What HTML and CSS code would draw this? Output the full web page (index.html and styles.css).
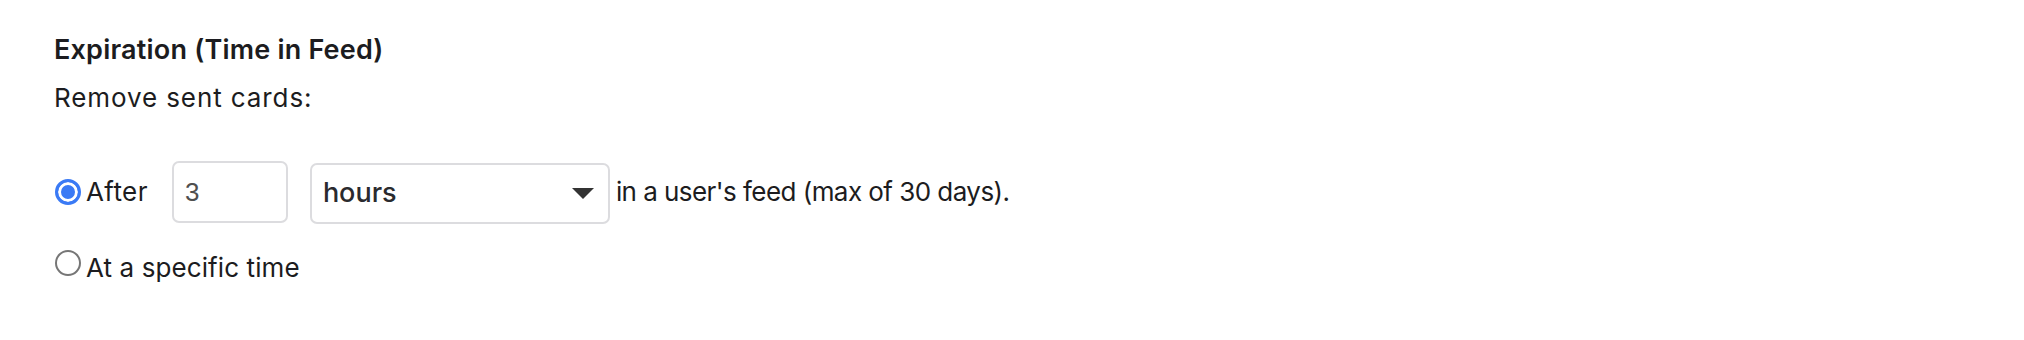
FILE: index.html
```html
<!DOCTYPE html>
<html lang="en">
<head>
<meta charset="utf-8">
<title>Expiration</title>
<link rel="stylesheet" href="styles.css">
</head>
<body>
<section class="panel">
  <h2 class="title">Expiration (Time in Feed)</h2>
  <p class="lead">Remove sent cards:</p>
  <div class="options">
    <label class="row row-after">
      <input type="radio" name="exp" class="radio" checked>
      <span class="label-text label-after">After</span>
      <span class="num-input">3</span>
      <span class="select">
        <span class="select-value">hours</span>
        <span class="caret"></span>
      </span>
      <span class="tail">in a user's feed (max of 30 days).</span>
    </label>
    <label class="row row-time">
      <input type="radio" name="exp" class="radio">
      <span class="label-text label-time">At a specific time</span>
    </label>
  </div>
</section>
</body>
</html>
```

FILE: styles.css
```css
html, body {
  margin: 0;
  padding: 0;
  background: #ffffff;
}

body {
  font-family: "Inter", "Liberation Sans", sans-serif;
  color: #1c1c20;
}

.panel {
  padding: 32px 0 0 54px;
}

.title {
  margin: 0;
  font-size: 27px;
  line-height: 36px;
  font-weight: 600;
  letter-spacing: 0.2px;
  color: #1c1c20;
}

.lead {
  margin: 12px 0 0 0;
  font-size: 26px;
  line-height: 36px;
  font-weight: 400;
  letter-spacing: 0.9px;
}

.options {
  margin-top: 45px;
  display: flex;
  flex-direction: column;
  gap: 27px;
}

.row {
  display: flex;
  align-items: center;
  font-size: 26px;
  line-height: 36px;
}

.row-after {
  height: 62px;
}

.radio {
  appearance: none;
  -webkit-appearance: none;
  margin: 0 5px 0 1px;
  width: 26px;
  height: 26px;
  border-radius: 50%;
  box-sizing: border-box;
  border: 2.5px solid #767676;
  background: #fff;
  flex: none;
}

.radio:checked {
  border: 3px solid #3a7af5;
  background: #3a7af5;
  box-shadow: inset 0 0 0 3px #ffffff;
}

.row-time .radio {
  position: relative;
  top: -5px;
}

.label-text {
  white-space: nowrap;
}

.label-after {
  letter-spacing: 0.4px;
}

.label-time {
  letter-spacing: 0.1px;
}

.num-input {
  margin-left: 24px;
  box-sizing: border-box;
  width: 116px;
  height: 62px;
  border: 2px solid #dcdcdf;
  border-radius: 7px;
  padding-left: 11px;
  display: flex;
  align-items: center;
  font-family: "Liberation Sans", "Inter", sans-serif;
  font-size: 26px;
  color: #4f4f4f;
}

.select {
  margin-left: 22px;
  box-sizing: border-box;
  width: 300px;
  height: 61px;
  margin-top: 2px;
  border: 2px solid #dcdcdf;
  border-radius: 7px;
  padding: 0 14px 0 11px;
  display: flex;
  align-items: center;
  justify-content: space-between;
}

.select-value {
  font-weight: 500;
  color: #2a2a2e;
  font-size: 27px;
}

.caret {
  width: 0;
  height: 0;
  border-left: 11px solid transparent;
  border-right: 11px solid transparent;
  border-top: 11px solid #333333;
}

.tail {
  margin-left: 6px;
  white-space: nowrap;
  letter-spacing: -0.55px;
}
```
